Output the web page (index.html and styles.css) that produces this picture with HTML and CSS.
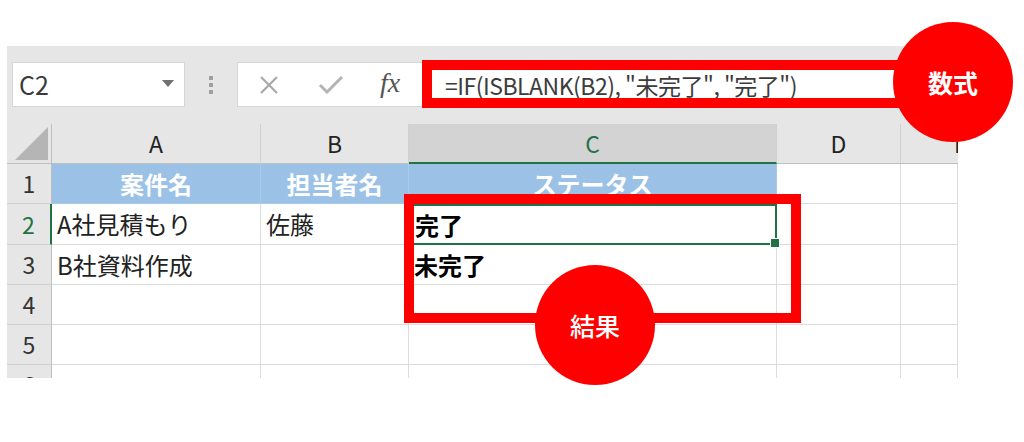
FILE: index.html
```html
<!DOCTYPE html>
<html lang="ja">
<head>
<meta charset="utf-8">
<title>ISBLANK</title>
<link rel="stylesheet" href="styles.css">
</head>
<body>
<div class="page">
  <div class="sheet">
    <div class="toolbar">
      <div class="namebox">
        <span class="ref">C2</span>
        <svg class="caret" width="12" height="7" viewBox="0 0 12 7"><path d="M0 0h12L6 7z" fill="#707070"/></svg>
      </div>
      <div class="dots"><i></i><i></i><i></i></div>
      <div class="fxbox">
        <svg class="tool" width="22" height="18" viewBox="0 0 22 18"><path d="M3 1l16 16M19 1L3 17" stroke="#a8a8a8" stroke-width="2.2" fill="none"/></svg>
        <svg class="tool" width="26" height="18" viewBox="0 0 26 18"><path d="M2 9l7 7L24 1" stroke="#b4b4b4" stroke-width="3" fill="none"/></svg>
        <span class="fx">fx</span>
      </div>
      <div class="formula">=IF(ISBLANK(B2), "未完了", "完了")</div>
    </div>
    <div class="grid">
      <div class="corner"></div>
      <div class="colhead">A</div>
      <div class="colhead">B</div>
      <div class="colhead active">C</div>
      <div class="colhead">D</div>
      <div class="colhead last">E</div>

      <div class="rowhead">1</div>
      <div class="cell title">案件名</div>
      <div class="cell title">担当者名</div>
      <div class="cell title">ステータス</div>
      <div class="cell"></div>
      <div class="cell"></div>

      <div class="rowhead active">2</div>
      <div class="cell">A社見積もり</div>
      <div class="cell">佐藤</div>
      <div class="cell bold selected">完了</div>
      <div class="cell"></div>
      <div class="cell"></div>

      <div class="rowhead">3</div>
      <div class="cell">B社資料作成</div>
      <div class="cell"></div>
      <div class="cell bold">未完了</div>
      <div class="cell"></div>
      <div class="cell"></div>

      <div class="rowhead">4</div>
      <div class="cell"></div>
      <div class="cell"></div>
      <div class="cell"></div>
      <div class="cell"></div>
      <div class="cell"></div>

      <div class="rowhead">5</div>
      <div class="cell"></div>
      <div class="cell"></div>
      <div class="cell"></div>
      <div class="cell"></div>
      <div class="cell"></div>

      <div class="rowhead">6</div>
      <div class="cell"></div>
      <div class="cell"></div>
      <div class="cell"></div>
      <div class="cell"></div>
      <div class="cell"></div>
    </div>
  </div>

  <div class="frame frame-formula"></div>
  <div class="frame frame-result"></div>
  <div class="badge badge-formula">数式</div>
  <div class="badge badge-result">結果</div>
</div>
</body>
</html>
```
FILE: styles.css
```css
* { box-sizing: border-box; }
html, body { margin: 0; padding: 0; background: #fff; }
body {
  font-family: "Noto Sans CJK JP", "Noto Sans", sans-serif;
  width: 1024px;
  height: 442px;
  overflow: hidden;
}
.page {
  position: relative;
  width: 1024px;
  height: 442px;
  padding: 46px 0 0 7px;
}
.sheet {
  width: 951px;
  height: 332px;
  overflow: hidden;
  background: #fff;
}
.toolbar {
  height: 78px;
  background: #e6e6e6;
  display: flex;
  align-items: flex-start;
  padding: 16px 3px 0 5px;
}
.namebox {
  width: 173px;
  height: 45px;
  background: #fff;
  border: 1px solid #d6d6d6;
  display: flex;
  align-items: center;
  justify-content: space-between;
  padding: 0 10px 0 6px;
}
.ref {
  font-size: 25px;
  color: #3a3a3a;
  line-height: 1;
}
.caret { margin-top: -2px; }
.dots {
  width: 52px;
  height: 45px;
  display: flex;
  flex-direction: column;
  align-items: center;
  justify-content: center;
  gap: 3px;
}
.dots i {
  width: 4px;
  height: 4px;
  background: #a0a0a0;
  display: block;
}
.fxbox {
  width: 185px;
  height: 45px;
  background: #fff;
  border: 1px solid #d6d6d6;
  border-right: none;
  display: flex;
  align-items: center;
  padding-left: 20px;
  gap: 38px;
}
.fx {
  font-family: "Liberation Serif", "DejaVu Serif", serif;
  font-style: italic;
  font-size: 28px;
  color: #555;
  margin-left: -2px;
  margin-top: -4px;
}
.formula {
  flex: 1;
  height: 45px;
  background: #fff;
  border: 1px solid #d6d6d6;
  display: flex;
  align-items: center;
  padding-left: 22px;
  font-size: 23px;
  letter-spacing: -0.5px;
  color: #3c3c3c;
  white-space: nowrap;
}
.grid {
  display: grid;
  grid-template-columns: 45px 209px 148px 368px 124px 57px;
  grid-template-rows: 40px 40px 41px 40px 40px 40px 40px;
  font-size: 24px;
  color: #222;
}
.corner {
  background: #e6e6e6;
  border-right: 1px solid #bfbfbf;
  border-bottom: 1px solid #bfbfbf;
  position: relative;
}
.corner::after {
  content: "";
  position: absolute;
  right: 3px;
  bottom: 3px;
  width: 0;
  height: 0;
  border-left: 33px solid transparent;
  border-bottom: 33px solid #b5b5b5;
}
.colhead {
  background: #e6e6e6;
  border-right: 1px solid #d0d0d0;
  border-bottom: 1px solid #bfbfbf;
  display: flex;
  align-items: center;
  justify-content: center;
  color: #222;
  line-height: 1;
  font-size: 23px;
}
.colhead.last {
  justify-content: flex-start;
  overflow: hidden;
  padding-left: 53px;
  border-right: none;
}
.colhead.active {
  background: #d3d3d3;
  color: #217346;
  border-bottom: 2px solid #217346;
}
.rowhead {
  background: #e6e6e6;
  border-right: 1px solid #bfbfbf;
  border-bottom: 1px solid #cfcfcf;
  display: flex;
  align-items: center;
  justify-content: center;
  color: #333;
  line-height: 1;
  font-size: 23px;
}
.rowhead.active {
  color: #217346;
  border-right: 2px solid #217346;
}
.cell {
  border-right: 1px solid #dcdcdc;
  border-bottom: 1px solid #dcdcdc;
  display: flex;
  align-items: center;
  padding-left: 5px;
  white-space: nowrap;
  line-height: 1;
  color: #222;
}
.cell.title {
  background: #9bc2e6;
  color: #fff;
  font-weight: 700;
  justify-content: center;
  padding-left: 0;
  border-right: 1px solid #a9c9e8;
  border-bottom: 1px solid #a9c9e8;
}
.cell.bold { font-weight: 700; color: #000; }
.cell.selected {
  border: 2px solid #217346;
  padding-left: 4px;
  position: relative;
}
.cell.selected::after {
  content: "";
  position: absolute;
  right: -5px;
  bottom: -5px;
  width: 8px;
  height: 8px;
  background: #217346;
  border: 1px solid #fff;
}
.frame {
  position: absolute;
  border: 10px solid #ff0000;
}
.frame-formula {
  left: 422px;
  top: 60px;
  width: 490px;
  height: 48px;
}
.frame-result {
  left: 404px;
  top: 194px;
  width: 397px;
  height: 129px;
}
.badge {
  position: absolute;
  width: 120px;
  height: 120px;
  border-radius: 50%;
  background: #ff0000;
  color: #fff;
  display: flex;
  align-items: center;
  justify-content: center;
  font-size: 25px;
  font-weight: 700;
  line-height: 1;
}
.badge-formula { left: 893px; top: 22px; }
.badge-result { left: 535px; top: 265px; font-weight: 500; }
```
